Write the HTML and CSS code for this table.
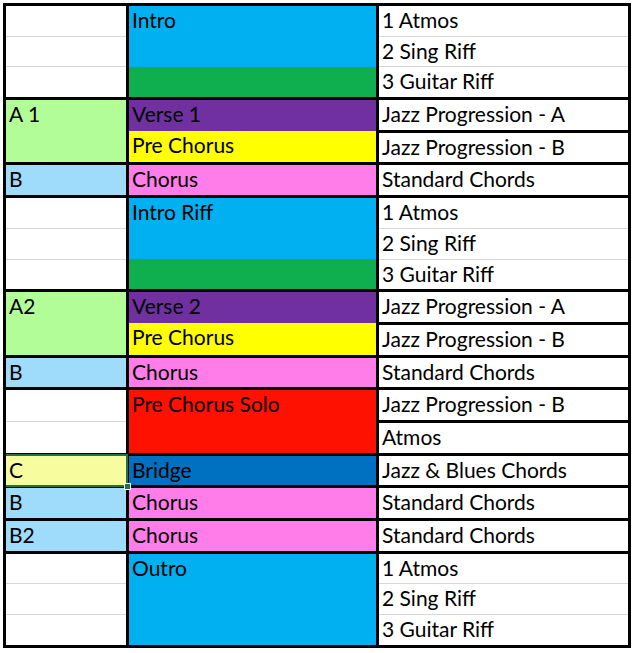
FILE: index.html
```html
<!DOCTYPE html>
<html>
<head>
<meta charset="utf-8">
<link rel="stylesheet" href="styles.css">
</head>
<body>
<table class="sheet">
  <colgroup><col class="c1"><col class="c2"><col class="c3"></colgroup>
  <tr class="g">
    <td class="l"></td>
    <td class="m blue" rowspan="2">Intro</td>
    <td class="r">1 Atmos</td>
  </tr>
  <tr>
    <td class="l"></td>
    <td class="r">2 Sing Riff</td>
  </tr>
  <tr>
    <td class="l"></td>
    <td class="m green nt">&nbsp;</td>
    <td class="r">3 Guitar Riff</td>
  </tr>
  <tr class="g">
    <td class="l lgreen" rowspan="2">A 1</td>
    <td class="m purple">Verse 1</td>
    <td class="r">Jazz Progression - A</td>
  </tr>
  <tr class="g">
    <td class="m yellow nt">Pre Chorus</td>
    <td class="r">Jazz Progression - B</td>
  </tr>
  <tr class="g">
    <td class="l lblue">B</td>
    <td class="m pink">Chorus</td>
    <td class="r">Standard Chords</td>
  </tr>
  <tr class="g">
    <td class="l"></td>
    <td class="m blue" rowspan="2">Intro Riff</td>
    <td class="r">1 Atmos</td>
  </tr>
  <tr>
    <td class="l"></td>
    <td class="r">2 Sing Riff</td>
  </tr>
  <tr>
    <td class="l"></td>
    <td class="m green nt">&nbsp;</td>
    <td class="r">3 Guitar Riff</td>
  </tr>
  <tr class="g">
    <td class="l lgreen" rowspan="2">A2</td>
    <td class="m purple">Verse 2</td>
    <td class="r">Jazz Progression - A</td>
  </tr>
  <tr class="g">
    <td class="m yellow nt">Pre Chorus</td>
    <td class="r">Jazz Progression - B</td>
  </tr>
  <tr class="g">
    <td class="l lblue">B</td>
    <td class="m pink">Chorus</td>
    <td class="r">Standard Chords</td>
  </tr>
  <tr class="g">
    <td class="l"></td>
    <td class="m red" rowspan="2">Pre Chorus Solo</td>
    <td class="r">Jazz Progression - B</td>
  </tr>
  <tr class="g">
    <td class="l thin"></td>
    <td class="r">Atmos</td>
  </tr>
  <tr class="g">
    <td class="l cyellow sel">C</td>
    <td class="m bblue">Bridge</td>
    <td class="r">Jazz &amp; Blues Chords</td>
  </tr>
  <tr class="g">
    <td class="l lblue">B</td>
    <td class="m pink">Chorus</td>
    <td class="r">Standard Chords</td>
  </tr>
  <tr class="g">
    <td class="l lblue">B2</td>
    <td class="m pink">Chorus</td>
    <td class="r">Standard Chords</td>
  </tr>
  <tr class="g">
    <td class="l"></td>
    <td class="m blue" rowspan="3">Outro</td>
    <td class="r">1 Atmos</td>
  </tr>
  <tr>
    <td class="l"></td>
    <td class="r">2 Sing Riff</td>
  </tr>
  <tr class="last">
    <td class="l"></td>
    <td class="r">3 Guitar Riff</td>
  </tr>
</table>
</body>
</html>
```
FILE: styles.css
```css
html, body {
  margin: 0;
  padding: 0;
  background: #ffffff;
}
body {
  padding: 3px 0 0 3px;
  font-family: Lato, "Noto Sans", sans-serif;
  font-size: 21px;
  color: #000;
}
.sheet {
  border-collapse: collapse;
  table-layout: fixed;
  width: 625px;
  border: 3px solid #000;
}
.c1 { width: 123px; }
.c2 { width: 250px; }
.c3 { width: 252px; }
.sheet td {
  height: 29.7px;
  padding: 0 3px;
  border: 1px solid #d6d6d6;
  vertical-align: top;
  line-height: 27px;
  white-space: nowrap;
  overflow: hidden;
}
.sheet td.l { padding-left: 3px; }
.sheet td.m,
.sheet td.r { border-left: 3px solid #000; }
.sheet tr.g td { border-top: 3px solid #000; }
.sheet tr.last td { border-bottom: 3px solid #000; }
.sheet td.nt,
.sheet tr.g td.nt { border-top-style: hidden; }
.sheet tr.g td.thin { border-top: 1px solid #d6d6d6; }

.blue { background: #00b0f0; }
.green { background: #0fae4f; }
.purple { background: #7030a0; }
.yellow { background: #ffff00; }
.pink { background: #ff7de8; }
.red { background: #fe1100; }
.bblue { background: #0070c0; }
.lgreen { background: #b3fd98; }
.lblue { background: #9fdcfc; }
.cyellow { background: #f7fc9e; }

.sheet td.sel {
  position: relative;
  overflow: visible;
}
.sheet td.sel::before {
  content: "";
  position: absolute;
  top: -2px;
  left: 0;
  right: -2px;
  bottom: -2px;
  border: 2px solid #217346;
  border-left: none;
  z-index: 1;
  pointer-events: none;
}
.sheet td.sel::after {
  content: "";
  position: absolute;
  right: -5px;
  bottom: -5px;
  width: 5px;
  height: 5px;
  background: #217346;
  border: 1px solid #fff;
  z-index: 2;
}
```
